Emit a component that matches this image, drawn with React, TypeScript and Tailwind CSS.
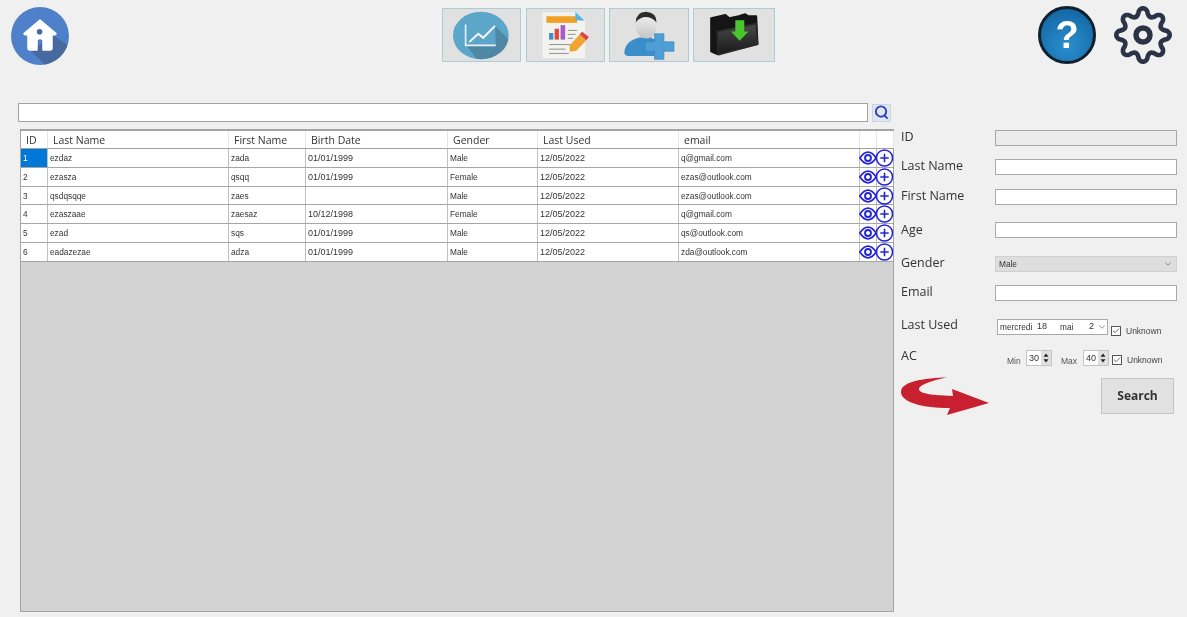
import { ChevronDown, Check } from "lucide-react";

const cols = ["w-[27px]", "w-[181px]", "w-[77px]", "w-[142px]", "w-[90px]", "w-[141px]", "w-[181px]", "w-[17px]", "w-[17px]"];

const people = [
  ["1", "ezdaz", "zada", "01/01/1999", "Male", "12/05/2022", "q@gmail.com"],
  ["2", "ezasza", "qsqq", "01/01/1999", "Female", "12/05/2022", "ezas@outlook.com"],
  ["3", "qsdqsqqe", "zaes", "", "Male", "12/05/2022", "ezas@outlook.com"],
  ["4", "ezaszaae", "zaesaz", "10/12/1998", "Female", "12/05/2022", "q@gmail.com"],
  ["5", "ezad", "sqs", "01/01/1999", "Male", "12/05/2022", "qs@outlook.com"],
  ["6", "eadazezae", "adza", "01/01/1999", "Male", "12/05/2022", "zda@outlook.com"],
];

const heads = ["ID", "Last Name", "First Name", "Birth Date", "Gender", "Last Used", "email", "", ""];

function HomeIcon() {
  return (
    <svg viewBox="0 0 58 58" className="w-[58px] h-[58px] shrink-0">
      <circle cx="29" cy="29" r="29" fill="#4f80ca" />
      <path d="M20 44 L42 28 L56.5 38 A29 29 0 0 1 34 57.5 Z" fill="#46699f" />
      <path d="M29 13 L45 26.5 Q45 28 41 28 L41 41 Q41 43 39 43 L32 43 L32 33 Q29 30 26 33 L26 43 L19 43 Q17 43 17 41 L17 28 Q13 28 13 26.5 Z" fill="#fff" stroke="#fff" strokeWidth="1.5" strokeLinejoin="round" />
      <circle cx="28.6" cy="24.8" r="2.8" fill="#46699f" />
    </svg>
  );
}

function ChartIcon() {
  return (
    <svg viewBox="60 25 190 160" className="w-[63px] h-[53px]">
      <defs>
        <clipPath id="chart-disc">
          <ellipse cx="153" cy="105" rx="84" ry="72" />
        </clipPath>
      </defs>
      <ellipse cx="153" cy="105" rx="84" ry="72" fill="#5ba6c9" />
      <path d="M110 135 L198 135 L196 76 L260 140 L200 200 L150 190 Z" fill="#4f88a5" clipPath="url(#chart-disc)" />
      <path d="M107 72 L107 135 L198 135" fill="none" stroke="#e8f2f6" strokeWidth="5" />
      <path d="M118 125 L145 100 L160 112 L196 76" fill="none" stroke="#f5fafc" strokeWidth="6" />
    </svg>
  );
}

function ReportIcon() {
  return (
    <svg viewBox="325 28 160 155" className="w-[53px] h-[51px]">
      <path d="M335 35 L440 35 L465 60 L465 175 L335 175 Z" fill="#f2f2ef" />
      <rect x="347" y="47" width="93" height="20" fill="#f0a023" />
      <path d="M435 33 L463 60 L435 60 Z" fill="#58b5e2" />
      <rect x="355" y="98" width="13" height="20" fill="#3f8fd0" />
      <rect x="372" y="85" width="13" height="33" fill="#e0483c" />
      <rect x="390" y="74" width="14" height="44" fill="#a45ecb" />
      <path d="M412 90 H440 M412 102 H436 M412 114 H428 M355 133 H420 M355 147 H405 M355 160 H415" stroke="#8f8f8f" strokeWidth="3" />
      <path d="M418 135 L450 100 L470 118 L438 152 L418 155 Z" fill="#f2a431" />
      <path d="M448 102 L456 94 L476 110 L468 120 Z" fill="#d9444e" />
    </svg>
  );
}

function UserPlusIcon() {
  return (
    <svg viewBox="580 30 170 155" className="w-[57px] h-[52px]">
      <defs>
        <linearGradient id="user-face" x1="0" y1="0" x2="0" y2="1">
          <stop offset="0" stopColor="#f4f4f4" />
          <stop offset="1" stopColor="#c4c4c4" />
        </linearGradient>
      </defs>
      <path d="M590 160 Q592 125 635 115 L670 115 Q690 125 700 150 L690 170 L600 170 Q590 168 590 160 Z" fill="#3a8fcb" />
      <ellipse cx="655" cy="80" rx="31" ry="38" fill="url(#user-face)" />
      <path d="M624 70 Q625 38 655 38 Q686 40 686 70 Q672 54 652 54 Q634 56 624 70 Z" fill="#2c2c2c" />
      <path d="M680 104 H708 V128 H738 V156 H708 V180 H680 V156 H652 V128 H680 Z" fill="#4f9fd4" stroke="#3b82b5" strokeWidth="2" strokeLinejoin="round" />
    </svg>
  );
}

function FolderIcon() {
  return (
    <svg viewBox="830 30 165 145" className="w-[55px] h-[48px]">
      <defs>
        <linearGradient id="folder-front" x1="0" y1="0" x2="0" y2="1">
          <stop offset="0" stopColor="#4a4a4a" />
          <stop offset="1" stopColor="#171717" />
        </linearGradient>
      </defs>
      <path d="M842 52 L885 42 L897 52 L925 46 L945 40 L955 46 L978 46 L982 130 L860 160 L842 152 Z" fill="#151515" stroke="#151515" strokeWidth="6" strokeLinejoin="round" />
      <path d="M860 92 L978 68 L982 130 L864 162 Z" fill="url(#folder-front)" stroke="#2a2a2a" strokeWidth="5" strokeLinejoin="round" />
      <path d="M915 58 H942 V92 H955 L928 120 L902 92 H915 Z" fill="#49c62e" />
    </svg>
  );
}

function HelpIcon() {
  return (
    <div className="w-[58px] h-[58px] shrink-0 rounded-full border-[3px] border-[#10202c] bg-[radial-gradient(circle_at_50%_70%,#2b8fcf,#0f5f9c)] flex items-center justify-center">
      <span className="text-white font-bold text-[38px] leading-none font-['Liberation_Sans',sans-serif]">?</span>
    </div>
  );
}

function GearIcon() {
  // lobed outline: one radius per angle, 8 rounded teeth with the first on top
  const pts = Array.from({ length: 240 }, (_, i) => {
    const ang = (i / 240) * Math.PI * 2;
    const c = Math.cos(8 * ang);
    const r = 23 + 3.7 * Math.sign(c) * Math.pow(Math.abs(c), 0.7);
    const x = 29 + r * Math.sin(ang);
    const y = 29 - r * Math.cos(ang);
    return `${x.toFixed(2)},${y.toFixed(2)}`;
  });
  return (
    <svg viewBox="0 0 58 58" className="w-[58px] h-[58px] shrink-0 ml-[18px]">
      <polygon points={pts.join(" ")} fill="none" stroke="#2b3446" strokeWidth="4.6" strokeLinejoin="round" />
      <circle cx="29" cy="29" r="7" fill="none" stroke="#2b3446" strokeWidth="5.5" />
    </svg>
  );
}

function EyeIcon() {
  return (
    <svg viewBox="0 0 17 17" className="w-[18px] h-[18px] shrink-0">
      <path d="M0.8 8.5 Q8.5 -2.5 16.2 8.5 Q8.5 19.5 0.8 8.5 Z" fill="none" stroke="#2424d8" strokeWidth="1.7" />
      <circle cx="8.5" cy="8.5" r="2.8" fill="none" stroke="#2424d8" strokeWidth="1.8" />
    </svg>
  );
}

function PlusIcon() {
  return (
    <svg viewBox="0 0 17 17" className="w-[18px] h-[18px] shrink-0 -translate-x-[1.5px]">
      <circle cx="8.5" cy="8.5" r="7.6" fill="#fff" stroke="#2424d8" strokeWidth="1.5" />
      <path d="M8.5 4.5 V12.5 M4.5 8.5 H12.5" stroke="#2424d8" strokeWidth="1.5" />
    </svg>
  );
}

function Field({ label, disabled, className, labelClass = "-translate-y-px" }: { label: string; disabled?: boolean; className: string; labelClass?: string }) {
  return (
    <div className={`flex items-center h-4 ${className}`}>
      <label className={`w-[94px] text-[12.5px] text-[#333] ${labelClass}`}>{label}</label>
      <input
        readOnly
        disabled={disabled}
        className={`w-[182px] h-4 border border-[#a9a9a9] ${disabled ? "bg-[#ececec]" : "bg-white"}`}
      />
    </div>
  );
}

function Unknown() {
  return (
    <div className="flex items-center">
      <span className="w-[10px] h-[10px] border border-[#555] bg-white flex items-center justify-center">
        <Check size={10} strokeWidth={2.2} color="#333" />
      </span>
      <span className="ml-[5px] text-[8.5px] text-[#444] font-['Liberation_Sans',sans-serif]">Unknown</span>
    </div>
  );
}

function Spin({ value }: { value: string }) {
  return (
    <div className="flex h-4 w-[26px] border border-[#c4c4c4] bg-white text-[9px] text-[#333] font-['Liberation_Sans',sans-serif]">
      <span className="flex-1 pl-[2px] leading-[14px]">{value}</span>
      <span className="w-[10px] bg-[#e0e0e0] flex items-center justify-center">
        <svg viewBox="0 0 6 10" className="w-[6px] h-[10px]">
          <path d="M3 0.5 L5.5 3.8 H0.5 Z M3 9.5 L5.5 6.2 H0.5 Z" fill="#222" />
        </svg>
      </span>
    </div>
  );
}

export default function App() {
  return (
    <div className="w-[1187px] h-[617px] overflow-hidden bg-[#f0f0f0] font-['Open_Sans',sans-serif] blur-[0.6px]">
      <header className="flex items-start h-[103px] pl-[11px] pt-[7px]">
        <HomeIcon />
        <div className="flex gap-1 ml-[373px] mt-px">
          <button className="w-[79px] h-[54px] mr-px flex items-center justify-center bg-[#e1e1e1] border border-[#aecbd8]"><ChartIcon /></button>
          <button className="w-[79px] h-[54px] flex items-center justify-center bg-[#e1e1e1] border border-[#aecbd8]"><ReportIcon /></button>
          <button className="w-[80px] h-[54px] flex items-center justify-center bg-[#e1e1e1] border border-[#aecbd8]"><UserPlusIcon /></button>
          <button className="w-[82px] h-[54px] flex items-center justify-center bg-[#e1e1e1] border border-[#aecbd8]"><FolderIcon /></button>
        </div>
        <div className="flex ml-[263px] -mt-px">
          <HelpIcon />
          <GearIcon />
        </div>
      </header>

      <div className="flex items-center ml-[18px] gap-1">
        <input readOnly className="w-[850px] h-[19px] bg-white border border-[#a3a3a3]" />
        <button className="w-[19px] h-[18px] flex items-center justify-center bg-[#dfe6ee] border border-[#c5d8e6]">
          <svg viewBox="0 0 16 16" className="w-[15px] h-[15px]">
            <circle cx="7.5" cy="7" r="5.5" fill="none" stroke="#2a3fc0" strokeWidth="2" />
            <path d="M11 11 L14.5 14.5" stroke="#2a3fc0" strokeWidth="2" />
          </svg>
        </button>
      </div>

      <main className="flex mt-[7px] ml-5">
        <div className="w-[874px] h-[483px] bg-[#d2d2d2] border border-[#a5a5a5] border-t-2">
          <div className="flex h-[18px] bg-white border-b border-[#a0a0a0] text-[10.5px] text-[#333]">
            {heads.map((h, i) => (
              <div key={i} className={`${cols[i]} shrink-0 pl-[5px] leading-[18px] border-r border-[#e6e6e6]`}>{h}</div>
            ))}
          </div>
          {people.map((row, r) => (
            <div key={r} className="flex h-[18.8px] bg-white border-b border-[#a6a6a6] text-[#333] font-['Liberation_Sans',sans-serif]">
              {row.map((cell, i) => (
                <div
                  key={i}
                  className={`${cols[i]} shrink-0 pl-[2px] leading-[18px] border-r border-[#c0c0c0] ${i === 3 || i === 5 ? "text-[9px]" : "text-[8.3px]"} ${i === 0 && r === 0 ? "bg-[#0078d7] text-white" : ""}`}
                >
                  {cell}
                </div>
              ))}
              <div className="w-[17px] shrink-0 flex items-center justify-center border-r border-[#c0c0c0]"><EyeIcon /></div>
              <div className="w-[17px] shrink-0 flex items-center justify-center"><PlusIcon /></div>
            </div>
          ))}
        </div>

        <aside className="ml-[7px] w-[280px] pt-px">
          <Field label="ID" disabled className="" />
          <Field label="Last Name" className="mt-[13px]" />
          <Field label="First Name" className="mt-[14px]" />
          <Field label="Age" className="mt-[17px]" labelClass="" />
          <div className="flex items-center h-4 mt-[18px]">
            <label className="w-[94px] text-[12.5px] text-[#333] -translate-y-px">Gender</label>
            <div className="w-[182px] h-4 flex items-center justify-between pl-[3px] pr-[3px] bg-[#dedede] border border-[#cfcfcf] text-[8.3px] text-[#333] font-['Liberation_Sans',sans-serif]">
              <span className="leading-none">Male</span>
              <ChevronDown size={10} color="#777" />
            </div>
          </div>
          <Field label="Email" className="mt-[13px]" />

          <div className="flex items-center h-4 mt-[18px]">
            <label className="w-[96px] text-[12.5px] text-[#333] -translate-y-[2px]">Last Used</label>
            <div className="w-[111px] h-4 flex items-center pl-[2px] bg-white border border-[#a9a9a9] text-[8.3px] text-[#333] font-['Liberation_Sans',sans-serif]">
              <span className="w-[37px]">mercredi</span>
              <span className="w-[23px] text-[9px]">18</span>
              <span className="w-[29px]">mai</span>
              <span className="text-[9px]">2</span>
              <ChevronDown size={10} color="#777" className="ml-[3px]" />
            </div>
            <div className="ml-[3px] mt-[8px]"><Unknown /></div>
          </div>

          <div className="flex items-center h-4 mt-[15px]">
            <label className="w-[106px] text-[12.5px] text-[#333] -translate-y-[2px]">AC</label>
            <span className="w-[19px] text-[8.5px] text-[#555] mt-[6px] font-['Liberation_Sans',sans-serif]">Min</span>
            <Spin value="30" />
            <span className="ml-[9px] w-[22px] text-[8.5px] text-[#555] mt-[6px] font-['Liberation_Sans',sans-serif]">Max</span>
            <Spin value="40" />
            <div className="ml-[3px] mt-[4px]"><Unknown /></div>
          </div>

          <div className="flex items-start justify-between mt-[11px] w-[273px]">
            <svg viewBox="0 0 88 38" className="w-[88px] h-[38px]">
              <path d="M46 0.5 C25 1 0 4 0 15 C0 23 14 28 26 29.5 C34 30.5 42 31 49 31 L46 38 L88 26 L51 12 L52 19 C38 18 18 18 18 12 C18 8 32 3 46 0.5 Z" fill="#c8202f" />
            </svg>
            <button className="w-[73px] h-9 mt-px bg-[#e1e1e1] border border-[#c4c4c4] text-[12px] font-bold text-[#333]">Search</button>
          </div>
        </aside>
      </main>
    </div>
  );
}
